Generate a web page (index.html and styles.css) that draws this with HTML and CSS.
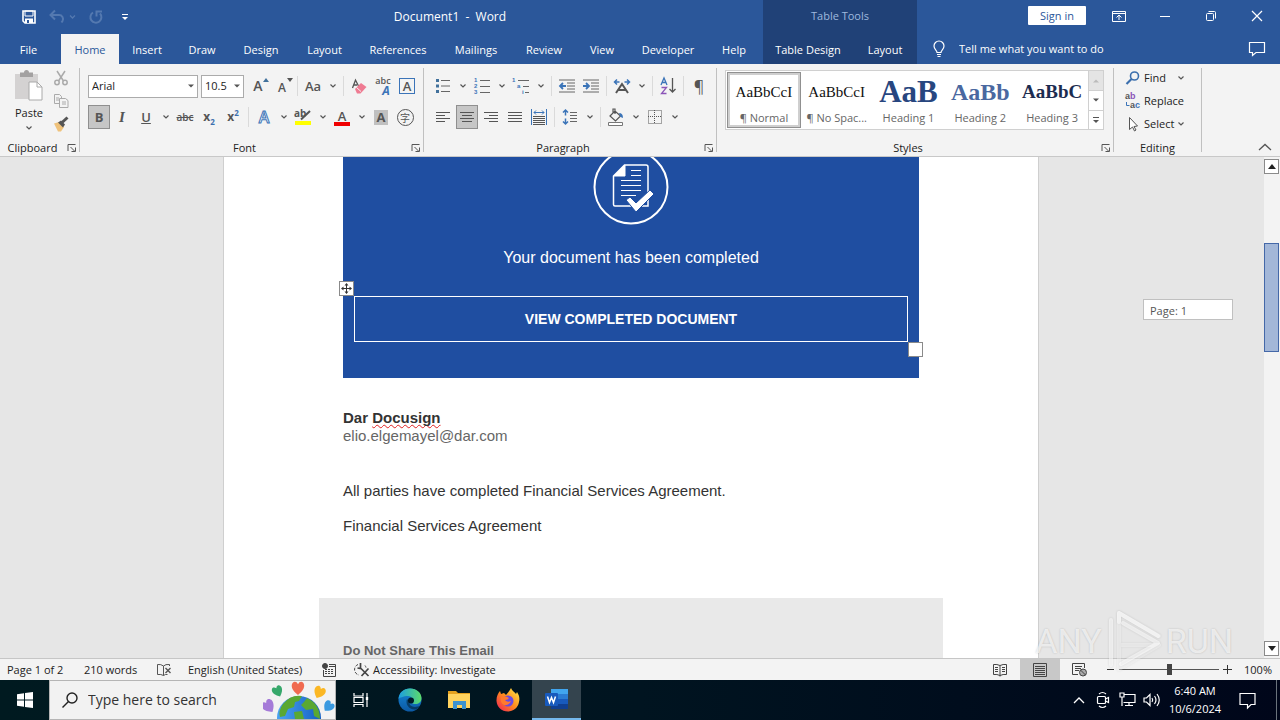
FILE: index.html
```html
<!DOCTYPE html>
<html lang="en">
<head>
<meta charset="utf-8">
<title>Document1 - Word</title>
<link rel="stylesheet" href="styles.css">
</head>
<body>
<svg class="defs" aria-hidden="true">
  <symbol id="chev" viewBox="0 0 8 6"><path d="M1.5 1.5 4 4 6.500 1.500" fill="none" stroke="#555" stroke-width="1.2"/></symbol>
  <symbol id="tri" viewBox="0 0 8 6"><path d="M1 1.500h6L4 4.500z" fill="#555"/></symbol>
  <symbol id="launch" viewBox="0 0 10 10"><path d="M1 8V1.500h7.500M3.500 4l4 4M8.500 4.500v4h-4" fill="none" stroke="#555"/></symbol>
</svg>

<header class="header">
  <div class="head-main">
    <div class="title-row">
      <div class="quick">
        <button class="qbtn" aria-label="Save"><svg width="16" height="16" viewBox="0 0 16 16"><path d="M2 2h12v12H4L2 12z" fill="none" stroke="#fff" stroke-width="1.600"/><path d="M4 2h8v5H4z" fill="none" stroke="#fff" stroke-width="1"/><path d="M4 9.500h8V14H4z" fill="#fff"/><path d="M6 11h2v3H6z" fill="#2b579a"/></svg></button>
        <button class="qbtn wide" aria-label="Undo"><svg width="28" height="16" viewBox="0 0 28 16" fill="none" stroke="#5479b0" stroke-width="2"><path d="M2 6h8a4 4 0 0 1 3.500 6l-1 1.500M6 1.500 1.500 6 6 10.500"/><path d="M21 6.500 23.500 9 26 6.500" stroke-width="1.300"/></svg></button>
        <button class="qbtn" aria-label="Repeat"><svg width="16" height="16" viewBox="0 0 16 16" fill="none" stroke="#5479b0" stroke-width="2"><path d="M5 3.500a5.500 5.500 0 1 0 7 1M8.500 7.500V2.500H14"/></svg></button>
        <button class="qbtn" aria-label="Customize Quick Access Toolbar"><svg width="8" height="8" viewBox="0 0 8 8"><path d="M1 1.500h6" stroke="#fff"/><path d="M1 4h6L4 7z" fill="#fff"/></svg></button>
      </div>
      <div class="doc-title">Document1&nbsp; -&nbsp; Word</div>
    </div>
    <nav class="tabs">
      <button class="tab file">File</button><button class="tab active">Home</button><button class="tab">Insert</button><button class="tab">Draw</button><button class="tab">Design</button><button class="tab">Layout</button><button class="tab">References</button><button class="tab">Mailings</button><button class="tab">Review</button><button class="tab">View</button><button class="tab">Developer</button><button class="tab">Help</button>
    </nav>
  </div>
  <div class="head-tools">
    <div class="tools-title">Table Tools</div>
    <nav class="tool-tabs"><button class="tab">Table Design</button><button class="tab">Layout</button></nav>
  </div>
  <div class="head-right">
    <div class="window-row">
      <button class="signin">Sign in</button>
      <button class="win" aria-label="Ribbon Display Options"><svg width="14" height="12" viewBox="0 0 14 12" fill="none" stroke="#fff"><path d="M.5 1.500h13v10H.5zM.5 3.500h13M7 10V5.500M4.500 7.500 7 5l2.500 2.500"/></svg></button>
      <button class="win" aria-label="Minimize"><svg width="12" height="12" viewBox="0 0 12 12"><path d="M1 6.500h10" stroke="#fff"/></svg></button>
      <button class="win" aria-label="Restore"><svg width="12" height="12" viewBox="0 0 12 12" fill="none" stroke="#fff"><rect x="1.500" y="3.500" width="7" height="7" rx="1"/><path d="M3.500 1.500h6a1 1 0 0 1 1 1v6"/></svg></button>
      <button class="win" aria-label="Close"><svg width="12" height="12" viewBox="0 0 12 12"><path d="m1 1 10 10M11 1 1 11" stroke="#fff" stroke-width="1.200"/></svg></button>
    </div>
    <div class="tell-row">
      <label class="tell"><svg width="14" height="18" viewBox="0 0 14 18" fill="none" stroke="#fff" stroke-width="1.200"><path d="M5 12.500c0-2-3-3-3-6.500a5 5 0 0 1 10 0c0 3.500-3 4.500-3 6.500zM5 14.500h4M5.500 16.500h3"/></svg><input type="text" placeholder="Tell me what you want to do" aria-label="Tell me what you want to do"></label>
      <button class="win" aria-label="Comments"><svg width="18" height="16" viewBox="0 0 18 16"><path d="M1.500 1.500h15v10H8l-3.500 3v-3h-3z" fill="none" stroke="#fff" stroke-width="1.200"/></svg></button>
    </div>
  </div>
</header>

<section class="ribbon">
  <div class="group">
    <div class="clip-body">
      <button class="paste"><svg width="32" height="32" viewBox="0 0 32 32"><path d="M2 4h23v25H2z" fill="#d4d2d2"/><path d="M7 2.500h4a2.500 2.500 0 0 1 5 0h4V7H7z" fill="#a3a1a1"/><path d="M16 12h8l5 5v13H16z" fill="#fff" stroke="#aaa"/><path d="M24 12v5h5" fill="none" stroke="#aaa"/></svg><span>Paste</span><svg width="8" height="6"><use href="#chev"/></svg></button>
      <div class="clip-side">
        <button aria-label="Cut"><svg width="16" height="16" viewBox="0 0 16 16" fill="none" stroke="#aaa" stroke-width="1.500"><path d="m4 1 6.500 10M12 1 5.500 11"/><circle cx="4" cy="12.500" r="2.200"/><circle cx="12" cy="12.500" r="2.200"/></svg></button>
        <button aria-label="Copy"><svg width="16" height="16" viewBox="0 0 16 16" fill="#f3f3f3" stroke="#aaa"><path d="M1.500 1.500h5l2 2v7h-7zM3 5h3M3 7h3"/><path d="M6.500 5.500h6l2.500 2v7H6.500zM9 9h4M9 11h4"/></svg></button>
        <button aria-label="Format Painter"><svg width="16" height="16" viewBox="0 0 16 16"><path d="M1 7.500 6 6l5 5-3 4.500H5z" fill="#efc27b"/><path d="m5 6.500 3-2 4 4-2 3z" fill="#555"/><path d="M9 6.500 14.500 1.500" stroke="#555" stroke-width="3"/></svg></button>
      </div>
    </div>
    <div class="foot"><span>Clipboard</span><button class="launch" aria-label="Clipboard settings"><svg width="10" height="10"><use href="#launch"/></svg></button></div>
  </div>
  <div class="divider"></div>

  <div class="group font-group">
    <div class="rows">
      <div class="row">
        <span class="combo name"><select aria-label="Font"><option>Arial</option></select><svg width="8" height="6"><use href="#tri"/></svg></span>
        <span class="combo size"><select aria-label="Font size"><option>10.5</option></select><svg width="8" height="6"><use href="#tri"/></svg></span>
        <button class="tb" aria-label="Increase font size"><span class="glyph">A</span><svg class="sup" width="6" height="4" viewBox="0 0 6 4"><path d="M3 0 6 4H0z" fill="#41719c"/></svg></button>
        <button class="tb" aria-label="Decrease font size"><span class="glyph small">A</span><svg class="sup" width="6" height="4" viewBox="0 0 6 4"><path d="M0 0h6L3 4z" fill="#555"/></svg></button>
        <i class="sep"></i>
        <button class="tb case">Aa</button><button class="dd" aria-label="Case options"><svg width="8" height="6"><use href="#chev"/></svg></button>
        <i class="sep"></i>
        <button class="tb" aria-label="Clear formatting"><svg width="16" height="16" viewBox="0 0 16 16"><path d="m1.500 10 3-8 3 6M3 7h3" fill="none" stroke="#555" stroke-width="1.300"/><path d="m4 11 6-6 5.500 4-6 6.500H6z" fill="#ef7b92"/><path d="m5.500 9.500 4.500 4" stroke="#f3f3f3"/></svg></button>
        <button class="tb stack" aria-label="Phonetic guide"><span>abc</span><em>A</em></button>
        <button class="tb" aria-label="Character border"><span class="boxed">A</span></button>
      </div>
      <div class="row">
        <button class="tb on bold">B</button><button class="tb italic">I</button><button class="tb under">U</button><button class="dd" aria-label="Underline options"><svg width="8" height="6"><use href="#chev"/></svg></button>
        <button class="tb strike">abc</button><button class="tb script" aria-label="Subscript">x<sub>2</sub></button><button class="tb script" aria-label="Superscript">x<sup>2</sup></button>
        <i class="sep"></i>
        <button class="tb effect">A</button><button class="dd" aria-label="Text effects options"><svg width="8" height="6"><use href="#chev"/></svg></button>
        <button class="tb" aria-label="Text highlight"><svg width="18" height="18" viewBox="0 0 18 18"><text x="0" y="9" class="svg-ab">ab</text><path d="M7 11.500 16 3" stroke="#555" stroke-width="2"/><path d="M1 13h16v4H1z" fill="#ff0"/></svg></button><button class="dd" aria-label="Highlight options"><svg width="8" height="6"><use href="#chev"/></svg></button>
        <button class="tb" aria-label="Font color"><span class="fontcolor">A</span></button><button class="dd" aria-label="Font color options"><svg width="8" height="6"><use href="#chev"/></svg></button>
        <button class="tb" aria-label="Character shading"><span class="shade">A</span></button>
        <button class="tb" aria-label="Enclose characters"><span class="ring">字</span></button>
      </div>
    </div>
    <div class="foot"><span>Font</span><button class="launch" aria-label="Font settings"><svg width="10" height="10"><use href="#launch"/></svg></button></div>
  </div>
  <div class="divider"></div>

  <div class="group para-group">
    <div class="rows">
      <div class="row">
        <button class="tb" aria-label="Bullets"><svg width="16" height="16" viewBox="0 0 16 16"><path d="M1 1h3v3H1zM1 6.500h3v3H1zM1 12h3v3H1z" fill="#41719c"/><path d="M6 2.500h9M6 8h9M6 13.500h9" stroke="#666"/></svg></button><button class="dd" aria-label="Bullet options"><svg width="8" height="6"><use href="#chev"/></svg></button>
        <button class="tb" aria-label="Numbering"><svg width="16" height="18" viewBox="0 0 16 18"><g class="svg-num"><text x="0" y="5">1</text><text x="0" y="11">2</text><text x="0" y="17">3</text></g><path d="M6 3.500h10M6 9.500h10M6 15.500h10" stroke="#666"/></svg></button><button class="dd" aria-label="Numbering options"><svg width="8" height="6"><use href="#chev"/></svg></button>
        <button class="tb" aria-label="Multilevel list"><svg width="18" height="18" viewBox="0 0 18 18"><g class="svg-num"><text x="0" y="5">1</text><text x="5" y="11">a</text><text x="10" y="17">i</text></g><path d="M6 3.500h11M11 9.500h6M13 15.500h4" stroke="#666"/></svg></button><button class="dd" aria-label="Multilevel options"><svg width="8" height="6"><use href="#chev"/></svg></button>
        <i class="sep"></i>
        <button class="tb" aria-label="Decrease indent"><svg width="18" height="16" viewBox="0 0 18 16"><path d="M1 2h16M9 5h8M9 8h8M9 11h8M1 14h16" stroke="#666"/><path d="M8 8H2M5 5 2 8l3 3" fill="none" stroke="#3b74b8" stroke-width="1.800"/></svg></button>
        <button class="tb" aria-label="Increase indent"><svg width="18" height="16" viewBox="0 0 18 16"><path d="M1 2h16M9 5h8M9 8h8M9 11h8M1 14h16" stroke="#666"/><path d="M1 8h6M4 5l3 3-3 3" fill="none" stroke="#3b74b8" stroke-width="1.800"/></svg></button>
        <i class="sep"></i>
        <button class="tb" aria-label="Asian layout"><svg width="18" height="16" viewBox="0 0 18 16" fill="none"><path d="M3 15 9 6l6 9M5 12h8" stroke="#555" stroke-width="2"/><path d="M6.500 4h-5M4 1.500 1.500 4 4 6.500M11.500 4h5M14 1.500 16.500 4 14 6.500" stroke="#3b74b8" stroke-width="1.500"/></svg></button><button class="dd" aria-label="Asian layout options"><svg width="8" height="6"><use href="#chev"/></svg></button>
        <i class="sep"></i>
        <button class="tb" aria-label="Sort"><svg width="16" height="18" viewBox="0 0 16 18" fill="none"><path d="m1 8 3-7 3 7M2 5.500h4" stroke="#3b74b8" stroke-width="1.300"/><path d="M1.500 10.500h5l-5 6h5" stroke="#8b55b8" stroke-width="1.300"/><path d="M12.500 1v14M9.500 12l3 3 3-3" stroke="#555" stroke-width="1.300"/></svg></button>
        <i class="sep"></i>
        <button class="tb pilcrow" aria-label="Show formatting marks">¶</button>
      </div>
      <div class="row">
        <button class="tb" aria-label="Align left"><svg width="16" height="14" viewBox="0 0 16 14"><path d="M1 2.500h14M1 5.500h9M1 8.500h14M1 11.500h9" stroke="#555"/></svg></button>
        <button class="tb on" aria-label="Center"><svg width="16" height="14" viewBox="0 0 16 14"><path d="M1 2.500h14M3 5.500h10M1 8.500h14M3 11.500h10" stroke="#555"/></svg></button>
        <button class="tb" aria-label="Align right"><svg width="16" height="14" viewBox="0 0 16 14"><path d="M1 2.500h14M6 5.500h9M1 8.500h14M6 11.500h9" stroke="#555"/></svg></button>
        <button class="tb" aria-label="Justify"><svg width="16" height="14" viewBox="0 0 16 14"><path d="M1 2.500h14M1 5.500h14M1 8.500h14M1 11.500h14" stroke="#555"/></svg></button>
        <button class="tb" aria-label="Distribute"><svg width="16" height="16" viewBox="0 0 16 16" fill="none"><path d="M.5 0v16M15.500 0v16" stroke="#3b74b8"/><path d="M3 3.500h10M5 1.500l-2 2 2 2M11 1.500l2 2-2 2" stroke="#3b74b8"/><path d="M2 7.500h12M2 9.500h12M2 11.500h12M2 13.500h12M2 15.500h12" stroke="#555"/></svg></button>
        <i class="sep"></i>
        <button class="tb" aria-label="Line spacing"><svg width="16" height="16" viewBox="0 0 16 16" fill="none"><path d="M3.500 1v5.500M1 3.500 3.500 1 6 3.500M3.500 9.500V15M1 12.500 3.500 15 6 12.500" stroke="#3b74b8" stroke-width="1.500"/><path d="M8 3.500h7M8 6.500h7M8 9.500h7M8 12.500h7" stroke="#666"/></svg></button><button class="dd" aria-label="Line spacing options"><svg width="8" height="6"><use href="#chev"/></svg></button>
        <i class="sep"></i>
        <button class="tb" aria-label="Shading"><svg width="18" height="18" viewBox="0 0 18 18" fill="none"><path d="m3 8 5-5 5.500 5-5 5zM6 5V1h2v5" stroke="#555" stroke-width="1.200"/><path d="M12 5q4 0 4 5l-2.500-1z" fill="#3b74b8"/><path d="M1.500 14.500h14v3h-14z" fill="#fff" stroke="#777"/></svg></button><button class="dd" aria-label="Shading options"><svg width="8" height="6"><use href="#chev"/></svg></button>
        <button class="tb" aria-label="Borders"><svg width="14" height="14" viewBox="0 0 14 14"><path d="M.5.500h13v13H.5zM6.500 0v14M0 6.500h14" fill="none" stroke="#555" stroke-dasharray="1 1"/></svg></button><button class="dd" aria-label="Border options"><svg width="8" height="6"><use href="#chev"/></svg></button>
      </div>
    </div>
    <div class="foot"><span>Paragraph</span><button class="launch" aria-label="Paragraph settings"><svg width="10" height="10"><use href="#launch"/></svg></button></div>
  </div>
  <div class="divider"></div>

  <div class="group styles-group">
    <div class="gallery">
      <button class="style picked"><b class="p-normal">AaBbCcI</b><span>¶ Normal</span></button>
      <button class="style"><b class="p-normal">AaBbCcI</b><span>¶ No Spac...</span></button>
      <button class="style"><b class="p-h1">AaB</b><span>Heading 1</span></button>
      <button class="style"><b class="p-h2">AaBb</b><span>Heading 2</span></button>
      <button class="style"><b class="p-h3">AaBbC</b><span>Heading 3</span></button>
      <div class="gscroll">
        <button class="off" aria-label="Previous styles"><svg width="8" height="6" viewBox="0 0 8 6"><path d="M1 4.500h6L4 1.500z" fill="#bbb"/></svg></button>
        <button aria-label="Next styles"><svg width="8" height="6"><use href="#tri"/></svg></button>
        <button aria-label="More styles"><svg width="8" height="8" viewBox="0 0 8 8"><path d="M1 1.500h6" stroke="#555"/><path d="M1 4h6L4 7z" fill="#555"/></svg></button>
      </div>
    </div>
    <div class="foot"><span>Styles</span><button class="launch" aria-label="Styles settings"><svg width="10" height="10"><use href="#launch"/></svg></button></div>
  </div>
  <div class="divider"></div>

  <div class="group edit-group">
    <div class="edit-body">
      <button><svg width="16" height="16" viewBox="0 0 16 16" fill="none" stroke="#3b6fad"><circle cx="9.500" cy="6" r="4" stroke-width="1.600"/><path d="m6.500 9-5 5" stroke-width="2.200"/></svg><span>Find</span><svg class="gap" width="8" height="6"><use href="#chev"/></svg></button>
      <button><svg width="16" height="16" viewBox="0 0 16 16"><g class="svg-rep"><text x="0" y="6">a<tspan fill="#8b55b8">b</tspan></text><text x="5" y="15">a<tspan fill="#3b74b8">c</tspan></text></g><path d="M1.500 9v3.500h3" fill="none" stroke="#3b74b8"/></svg><span>Replace</span></button>
      <button><svg width="16" height="16" viewBox="0 0 16 16"><path d="M4.500 1.500v12l3-2.500 2 4 1.500-1-2-3.500 3.500-.5z" fill="#fff" stroke="#555"/></svg><span>Select</span><svg width="8" height="6"><use href="#chev"/></svg></button>
    </div>
    <div class="foot solo"><span>Editing</span></div>
  </div>
  <div class="divider"></div>
  <button class="collapse" aria-label="Collapse the Ribbon"><svg width="14" height="8" viewBox="0 0 14 8"><path d="m1 7 6-5.500L13 7" fill="none" stroke="#555" stroke-width="1.300"/></svg></button>
</section>

<main class="work">
  <div class="canvas">
    <article class="page">
      <section class="card">
        <svg class="badge" width="76" height="76" viewBox="0 0 76 76" fill="none" stroke="#fff"><circle cx="38" cy="38" r="36.500" stroke-width="2"/><path d="M31.500 16H53a2 2 0 0 1 2 2v39H22a1.500 1.500 0 0 1-1.500-1.500V27z" stroke-width="1.500"/><path d="M32 16v11H21z" fill="#fff"/><path d="M38 21.500h10M38 26.500h10M28 31.500h20M28 36.500h20M28 41.500h20M28 46.500h15" stroke-width="1.200"/><path d="m33 51 4-3 6 6 14-13 4 4-18 18z" fill="#fff" stroke="#1f4ea1" stroke-width="1"/></svg>
        <p class="lead">Your document has been completed</p>
        <div class="cta-wrap">
          <a class="cta" href="#">VIEW COMPLETED DOCUMENT</a>
          <span class="handle move"><svg width="11" height="11" viewBox="0 0 11 11"><path d="M5.500 1v9M1 5.500h9" stroke="#333"/><path d="M5.500 0 7.500 2.500h-4zM5.500 11l-2-2.500h4zM0 5.500l2.500-2v4zM11 5.500l-2.500 2v-4z" fill="#333"/></svg></span>
          <span class="handle resize"></span>
        </div>
      </section>
      <p class="sender">Dar <span class="typo">Docusign</span></p>
      <p class="mail">elio.elgemayel@dar.com</p>
      <p class="para">All parties have completed Financial Services Agreement.</p>
      <p class="para last">Financial Services Agreement</p>
      <section class="notice"><h2>Do Not Share This Email</h2></section>
    </article>
    <div class="tip">Page: 1</div>
  </div>
  <div class="vscroll">
    <button aria-label="Scroll up"><svg width="8" height="5" viewBox="0 0 8 5"><path d="M4 0 8 5H0z" fill="#222"/></svg></button>
    <div class="track"><div class="thumb"></div></div>
    <button aria-label="Scroll down"><svg width="8" height="5" viewBox="0 0 8 5"><path d="M0 0h8L4 5z" fill="#222"/></svg></button>
  </div>
  <div class="mark"><span>ANY</span><svg width="58" height="62" viewBox="0 0 58 62" fill="none" stroke="#fff" stroke-width="4" stroke-linejoin="round" stroke-linecap="round"><path d="M14 12V3l40 23M14 3v56l40-24-40 0" stroke-opacity=".35"/><path d="M6 10v45M14 12V3l39 23M16 54l37-21-35-20" stroke-opacity=".6"/></svg><span>RUN</span></div>
</main>

<footer class="status">
  <span class="st-page">Page 1 of 2</span>
  <span class="st-words">210 words</span>
  <svg class="st-book" width="16" height="14" viewBox="0 0 16 14" fill="none" stroke="#555"><path d="M7.500 12.500Q5 11 1.500 11.500v-10Q5 1 7.500 3zM7.500 3q2-2 6-1.500V3M7.500 12.500q2-1.500 4-1"/><path d="m9.500 5 5 5M14.500 5l-5 5" stroke-width="1.400"/></svg>
  <span class="st-lang">English (United States)</span>
  <svg class="st-macro" width="14" height="14" viewBox="0 0 14 14" fill="none" stroke="#444"><circle cx="3" cy="3" r="2.500" fill="#444"/><path d="M7 1.500h6.500v12h-12V7M7 3.500h6" /><path d="M3 6.500h9M3 8.500h9M3 10.500h9" stroke-dasharray="2 1"/></svg>
  <span class="st-acc"><svg width="18" height="16" viewBox="0 0 18 16" fill="none" stroke="#444"><path d="M5 2.500A5.500 5.500 0 0 0 6 13M12 3.500a5 5 0 0 1 1 2" stroke-dasharray="3 1.500"/><path d="M7.500 1v5.500L4.500 6M8 6.500 15.500 14M15.500 6.500 8.500 14" stroke-width="1.700"/></svg>Accessibility: Investigate</span>
  <span class="grow"></span>
  <button class="view" aria-label="Read Mode"><svg width="14" height="14" viewBox="0 0 14 14" fill="none" stroke="#444"><path d="M7 12.500Q4 11 .500 11.500v-10Q4 1 7 2.500 10 1 13.500 1.500v10Q10 11 7 12.500zM7 2.500v11M2 4.500h3M2 6.500h3M2 8.500h3M9 4.500h3M9 6.500h3M9 8.500h3"/></svg></button>
  <button class="view current" aria-label="Print Layout"><svg width="14" height="14" viewBox="0 0 14 14" fill="none" stroke="#444"><path d="M.5.500h13v13H.5zM2 3.500h10M2 5.500h10M2 7.500h10M2 9.500h10M2 11.500h10"/></svg></button>
  <button class="view" aria-label="Web Layout"><svg width="16" height="14" viewBox="0 0 16 14" fill="none" stroke="#444"><path d="M12.500 5V.500H.500v11H6M3 3.500h7M3 5.500h6M3 7.500h4"/><circle cx="11" cy="9.500" r="3.500" fill="#aaa"/><path d="m8.500 7 5 5"/></svg></button>
  <span class="zoom"><button aria-label="Zoom out"><svg width="9" height="9" viewBox="0 0 9 9"><path d="M1 4.500h7" stroke="#333"/></svg></button><input type="range" min="0" max="100" value="50" aria-label="Zoom"><button aria-label="Zoom in"><svg width="9" height="9" viewBox="0 0 9 9"><path d="M0 4.500h9M4.500 0v9" stroke="#333"/></svg></button></span>
  <span class="st-zoom">100%</span>
</footer>

<div class="taskbar">
  <button class="start" aria-label="Start"><svg width="16" height="16" viewBox="0 0 16 16" fill="#fff"><path d="m0 2.200 7-1v6.300H0zM8 1l8-1v7.500H8zM0 8.500h7v6.300l-7-1zM8 8.500h8V16l-8-1z"/></svg></button>
  <label class="search"><svg width="18" height="18" viewBox="0 0 18 18" fill="none" stroke="#222" stroke-width="1.400"><circle cx="11" cy="7" r="5"/><path d="m7.500 10.500-6 6"/></svg><input type="text" placeholder="Type here to search" aria-label="Type here to search">
    <svg class="globe" width="72" height="38" viewBox="0 0 72 38"><defs><path id="heart" d="M0 5C-8-1-5-6-2.500-6Q-1-6 0-4 1-6 2.500-6C5-6 8-1 0 5z"/><linearGradient id="sea" x2="1"><stop stop-color="#4ba3f2"/><stop offset="1" stop-color="#1560c4"/></linearGradient></defs><circle cx="36" cy="37" r="22" fill="url(#sea)"/><path d="M20 23q8-10 19-8l-3 5-4 1-1 5-6 2-3 7-5 1q-2-6 3-13zM44 17q13 6 13 21l-6-3-1-7-7 1-5-5 3-3zM31 31l8-1 2 8h-9z" fill="#5aa832"/><use href="#heart" transform="translate(35 8) scale(1.200)" fill="#f06a50"/><use href="#heart" transform="translate(15 11) rotate(-25)" fill="#37a86b"/><use href="#heart" transform="translate(56 12) rotate(25) scale(1.100)" fill="#fbb724"/><use href="#heart" transform="translate(6 26) rotate(-35) scale(1.200)" fill="#a57bd8"/><use href="#heart" transform="translate(65 26) rotate(40)" fill="#3b9ae0"/></svg>
  </label>
  <button class="task" aria-label="Task View"><svg width="16" height="16" viewBox="0 0 16 16" fill="none" stroke="#fff" stroke-width="1.200"><path d="M1 1v3h9V1M1 15v-2.500h9V15M1 5.500h9v5H1zM14 1v4M14 8v7"/><path d="M14 5v3" stroke-width="2.400"/></svg></button>
  <button class="task" aria-label="Microsoft Edge"><svg width="24" height="24" viewBox="0 0 24 24"><defs><linearGradient id="eg" x2="1" y2="0"><stop stop-color="#1b9de2"/><stop offset="1" stop-color="#5ddc6a"/></linearGradient><linearGradient id="eb" y2="1" x2="0"><stop stop-color="#1688d8"/><stop offset="1" stop-color="#0c59a4"/></linearGradient></defs><circle cx="12" cy="12" r="11.500" fill="url(#eb)"/><path d="M.5 11C1 4 6 .5 12 .5c7 0 11.500 4.500 11.500 9.500 0 4-3 6-6 6-4 0-4.500-2-3.500-3 1-2-.5-5-4-5C5.500 8 1 10 .5 11z" fill="url(#eg)"/><path d="M9 11c-2 5 2 11 8.500 10.500 2-.5 4-2 5-4-6 3-12 1-11-4z" fill="#001622" opacity=".5"/><circle cx="13" cy="12.500" r="3" fill="#001a28"/></svg></button>
  <button class="task" aria-label="File Explorer"><svg width="22" height="20" viewBox="0 0 22 20"><path d="M0 1h8l2 2h12v4H0z" fill="#e5a21f"/><path d="M0 4h22v14H0z" fill="#ffd35e"/><path d="M5 11h13v8h-4v-4H9v4H5z" fill="#3c92cf"/></svg></button>
  <button class="task" aria-label="Firefox"><svg width="24" height="24" viewBox="0 0 24 24"><defs><linearGradient id="ff" x1="1" x2="0" y2="1"><stop stop-color="#fff04a"/><stop offset=".5" stop-color="#ff8a1d"/><stop offset="1" stop-color="#ee1a5b"/></linearGradient></defs><path d="M15 0c1 3 4 4 5 6l1-2c2 3 3 6 2 10-1 6-6 9.500-11 9.500C5.500 23.500 1 19 .5 13 .3 9 2 5 4 3l1 3 3-1 2 2q3-3 5-7z" fill="url(#ff)"/><circle cx="12" cy="13" r="5.500" fill="#6a4be0"/><path d="M5 9q4-2 8 1-1 2-4 2 2 3 6 1-2 5-7 4-4-2-3-8z" fill="#ff7a2d"/></svg></button>
  <button class="task open" aria-label="Word"><svg width="24" height="22" viewBox="0 0 24 22"><path d="M6 1h17v5H6z" fill="#41a5ee"/><path d="M6 6h17v5H6z" fill="#2b7cd3"/><path d="M6 11h17v5H6z" fill="#185abd"/><path d="M6 16h17v5H6z" fill="#103f91"/><rect y="5" width="13" height="13" rx="1" fill="#185abd"/><path d="m2.500 8.500 2 6 2-5 2 5 2-6" fill="none" stroke="#fff" stroke-width="1.500"/></svg></button>
  <span class="grow"></span>
  <button class="tray" aria-label="Show hidden icons"><svg width="12" height="8" viewBox="0 0 12 8"><path d="m1 7 5-5 5 5" fill="none" stroke="#fff" stroke-width="1.300"/></svg></button>
  <button class="tray" aria-label="Meet Now"><svg width="14" height="18" viewBox="0 0 14 18" fill="none" stroke="#fff" stroke-width="1.200"><rect x="1.500" y="5.500" width="8" height="7" rx="1"/><path d="m9.500 8 3-1.500v5L9.500 10M3 3q3.500-3 7 0M3 15q3.500 3 7 0"/></svg></button>
  <button class="tray" aria-label="Network"><svg width="17" height="16" viewBox="0 0 17 16" fill="none" stroke="#fff" stroke-width="1.200"><path d="M5 2.500h11v8H4.500M10 10.500v3M6 13.500h8M1 1h4v4H1zM3 5v9"/></svg></button>
  <button class="tray" aria-label="Volume"><svg width="17" height="16" viewBox="0 0 17 16" fill="none" stroke="#fff" stroke-width="1.200"><path d="M1 6h2.500L7 2.500v11L3.500 10H1zM9 6q1.500 2 0 4M11.500 4q3 4 0 8M14 2q4.500 6 0 12"/></svg></button>
  <div class="clock"><span>6:40 AM</span><span>10/6/2024</span></div>
  <button class="action" aria-label="Notifications"><svg width="17" height="17" viewBox="0 0 17 17"><path d="M1 1.500h15v11h-4l-3.500 3.500v-3.500H1z" fill="none" stroke="#fff" stroke-width="1.200"/></svg></button>
  <i class="peek"></i>
</div>
</body>
</html>
```
FILE: styles.css
```css
* { box-sizing: border-box; }
html, body { height: 100%; }
body {
  margin: 0;
  display: flex;
  flex-direction: column;
  overflow: hidden;
  font-family: "Open Sans", "Noto Sans", sans-serif;
  font-size: 11px;
  line-height: 16px;
  color: #333;
  background: #e6e6e6;
}
button, input, select { font: inherit; color: inherit; }
button { border: 0; padding: 0; margin: 0; background: none; display: flex; align-items: center; justify-content: center; }
svg { display: block; flex: none; overflow: visible; }
p, h2 { margin: 0; }
.defs { position: absolute; width: 0; height: 0; }
.grow { flex: 1; }

/* Header */
.header { display: flex; flex: none; height: 64px; background: #2b579a; color: #fff; }
.head-main { flex: 0 0 763px; display: flex; flex-direction: column; }
.title-row { display: flex; height: 34px; align-items: center; }
.quick { display: flex; align-items: center; padding-left: 17px; width: 137px; }
.qbtn { width: 24px; height: 24px; }
.qbtn + .qbtn { margin-left: 5px; }
.qbtn.wide { width: 34px; }
.doc-title { flex: 1; text-align: center; font-size: 12px; }
.tabs { display: grid; grid-template-columns: 61px 58px 56px 54px 64px 63px 84px 72px 64px 52px 80px 52px; height: 30px; }
.tab { height: 30px; padding-top: 2px; white-space: nowrap; }
.tab.file { padding-right: 4px; }
.tab.active { background: #f3f3f3; color: #2b579a; }
.head-tools { flex: 0 0 154px; display: flex; flex-direction: column; background: #204177; }
.tools-title { height: 34px; line-height: 32px; text-align: center; color: #9fb9de; }
.tool-tabs { display: grid; grid-template-columns: 90px 64px; }
.head-right { flex: 1; display: flex; flex-direction: column; }
.window-row { display: flex; height: 34px; align-items: center; justify-content: flex-end; padding-bottom: 3px; }
.signin { background: #fff; color: #2b579a; width: 58px; height: 19px; border-radius: 1px; margin-right: 10px; }
.win { width: 46px; height: 30px; }
.tell-row { display: flex; height: 30px; align-items: center; justify-content: space-between; padding-left: 15px; }
.tell { display: flex; align-items: center; gap: 13px; flex: 1; }
.tell input { flex: 1; min-width: 0; border: 0; background: none; padding: 0; outline: 0; }
.tell input::placeholder { color: #fff; opacity: 1; }

/* Ribbon */
.ribbon { display: flex; flex: none; height: 93px; background: #f3f3f3; border-bottom: 1px solid #c8c8c8; }
.divider { width: 1px; margin: 4px 0; background: #c0c0c0; }
.group { display: flex; flex-direction: column; }
.foot { display: grid; grid-template-columns: 1fr 14px; height: 16px; align-items: center; text-align: center; color: #222; }
.foot.solo { grid-template-columns: 1fr; }
.launch { height: 16px; }
.launch svg { width: 10px; }
.clip-body { display: flex; height: 76px; padding: 6px 8px 0 10px; }
.clip-body + .foot { width: 79px; }
.paste { flex-direction: column; justify-content: flex-start; width: 38px; height: 64px; }
.paste span { margin-bottom: 4px; color: #222; }
.paste svg:first-child { margin-bottom: 3px; }
.clip-side { display: flex; flex-direction: column; gap: 7px; margin-left: 5px; }
.rows { height: 76px; padding: 10px 0 0 8px; display: flex; flex-direction: column; gap: 7px; }
.row { display: flex; height: 24px; align-items: center; }
.font-group { width: 343px; }
.para-group { width: 292px; }
.styles-group { width: 396px; }
.edit-group { width: 87px; }
.tb { width: 24px; height: 24px; position: relative; color: #555; flex: none; }
.dd { width: 15px; height: 24px; flex: none; }
.tb.on { width: 22px; margin: 0 1px; background: #c6c6c6; border: 1px solid #8f8f8f; }
.tb.on.bold { margin: 0; }
.sep { width: 1px; height: 20px; margin: 0 3px; background: #dadada; }
.combo { position: relative; height: 23px; }
.combo select { appearance: none; width: 100%; height: 23px; border: 1px solid #ababab; border-radius: 0; background: #fff; color: #222; padding: 0 3px; }
.combo svg { position: absolute; right: 3px; top: 8px; pointer-events: none; }
.combo.name { width: 110px; margin-right: 3px; }
.combo.size { width: 43px; margin-right: 2px; }
.glyph { font-size: 14px; font-weight: 600; }
.glyph.small { font-size: 12px; padding-top: 3px; }
.sup { position: absolute; right: 1px; top: 4px; }
.tb.case { font-size: 13px; font-weight: 600; }
.stack { flex-direction: column; line-height: 10px; }
.stack span { font-size: 9px; font-weight: 600; }
.stack em { font-size: 12px; font-weight: 700; color: #3b74b8; padding-left: 6px; }
.boxed { width: 16px; height: 16px; border: 1px solid #3b74b8; font-size: 13px; font-weight: 600; line-height: 14px; }
.bold { font-size: 13px; font-weight: 700; }
.italic { font: italic bold 15px "Liberation Serif", serif; }
.under { font-size: 13px; font-weight: 600; text-decoration: underline; }
.strike { font-size: 10px; font-weight: 600; text-decoration: line-through; }
.script { font-size: 12px; font-weight: 700; }
.script sub, .script sup { font-size: 8px; line-height: 8px; color: #3b6fad; }
.script sub { align-self: flex-end; padding-bottom: 3px; }
.script sup { align-self: flex-start; padding-top: 4px; }
.effect { font-size: 16px; font-weight: 600; color: #fff; -webkit-text-stroke: 1px #3b74b8; }
.fontcolor { width: 16px; height: 17px; font-size: 13px; font-weight: 600; line-height: 14px; border-bottom: 4px solid #f00000; }
.shade { width: 14px; height: 15px; background: #c0c0c0; font-size: 13px; font-weight: 700; line-height: 15px; }
.ring { width: 17px; height: 17px; border: 1px solid #555; border-radius: 50%; font: 10px/15px "Noto Sans CJK SC", sans-serif; }
.svg-ab { font: bold 10px "Open Sans", sans-serif; fill: #555; }
.svg-num { font: bold 6px "Liberation Sans", sans-serif; fill: #3b74b8; }
.svg-rep { font: bold 9px "Liberation Sans", sans-serif; fill: #555; }
.pilcrow { font-size: 16px; }
.para-group .rows { padding-left: 7px; }
.gallery { display: flex; height: 60px; margin: 6px 9px 10px 8px; padding: 1px 0 1px 1px; border: 1px solid #d0d0d0; background: #fff; }
.style { flex: 1; flex-direction: column; height: 56px; min-width: 0; white-space: nowrap; color: #666; }
.style.picked { border: 1px solid #909090; box-shadow: inset 0 0 0 2px #cfcfcf; }
.style b { height: 36px; line-height: 38px; font-family: "Liberation Serif", serif; }
.style span { line-height: 18px; }
.p-normal { font-size: 15px; font-weight: 400; color: #111; }
.p-h1 { font-size: 31px; color: #28467f; }
.p-h2 { font-size: 24px; color: #4a68a0; }
.p-h3 { font-size: 19px; color: #1c2c50; }
.gscroll { width: 15px; margin: -1px 0; border-left: 1px solid #d0d0d0; display: grid; grid-template-rows: 1fr 1fr 1fr; }
.gscroll button + button { border-top: 1px solid #d0d0d0; }
.gscroll .off { background: #e4e4e4; }
.edit-body { display: flex; flex-direction: column; gap: 7px; height: 76px; padding: 6px 0 0 11px; }
.edit-body button { justify-content: flex-start; gap: 3px; height: 16px; color: #222; }
.edit-body .gap { margin-left: 8px; }
.collapse { margin: auto 8px 4px auto; height: 10px; }

/* Document area */
.work { flex: 1; min-height: 0; display: flex; position: relative; }
.canvas { flex: 1; min-width: 0; position: relative; overflow: hidden; display: flex; justify-content: center; align-items: flex-start; padding-right: 2px; background: #e6e6e6; }
.page { width: 816px; margin-top: -20px; padding: 0 119px 80px; background: #fff; border: 1px solid #cfcfcf; font-family: "Liberation Sans", Arial, sans-serif; font-size: 15px; line-height: 18px; }
.card { background: #1f4ea1; color: #fff; padding: 11px 11px 36px; }
.badge { margin: 0 auto 24px; }
.lead { text-align: center; font-size: 16px; margin-bottom: 29px; }
.cta-wrap { position: relative; }
.cta { display: block; border: 1px solid #fff; color: #fff; text-decoration: none; text-align: center; font-size: 14px; font-weight: 700; line-height: 44px; }
.handle { position: absolute; width: 15px; height: 15px; background: #fff; border: 1px solid #8a8a8a; display: flex; align-items: center; justify-content: center; }
.handle.move { left: -15px; top: -15px; }
.handle.resize { right: -15px; bottom: -15px; }
.sender { margin-top: 31px; font-weight: 700; }
.typo { text-decoration: underline wavy #e02020 1px; text-underline-offset: 1px; text-decoration-skip-ink: none; }
.mail { color: #666; margin-bottom: 37px; }
.para { margin-bottom: 17px; }
.para.last { margin-bottom: 63px; }
.notice { margin: 0 -24px; padding: 44px 24px; background: #e9e9e9; color: #666; }
.notice h2 { font-size: 13px; line-height: 18px; }
.tip { position: absolute; right: 31px; top: 142px; width: 90px; height: 21px; line-height: 21px; padding-left: 6px; background: #fff; border: 1px solid #c0c0c0; color: #555; }
.vscroll { width: 16px; padding: 2px 1px 2px 0; display: flex; flex-direction: column; background: #f3f3f3; }
.vscroll button { height: 15px; background: #fff; border: 1px solid #8a8a8a; }
.track { flex: 1; padding-top: 69px; }
.thumb { height: 109px; background: #a3b7d8; border: 1px solid #4468a8; }
.mark { position: absolute; right: 47px; bottom: -14px; display: flex; align-items: center; gap: 3px; color: rgba(255, 255, 255, .7); font: 400 34px/44px "Roboto", sans-serif; text-shadow: 0 0 2px rgba(0, 0, 0, .2); pointer-events: none; z-index: 2; }
.mark svg { filter: drop-shadow(0 0 1px rgba(0, 0, 0, .2)); }

/* Status bar */
.status { flex: none; display: flex; align-items: center; height: 22px; padding: 0 8px 0 7px; background: #f3f3f3; border-top: 1px solid #c6c6c6; color: #222; white-space: nowrap; }
.st-page { width: 77px; }
.st-words { width: 72px; }
.st-book { margin-right: 16px; }
.st-lang { width: 134px; }
.st-macro { margin-right: 17px; }
.st-acc { display: flex; align-items: center; gap: 2px; }
.view { width: 40px; height: 21px; }
.view.current { background: #c8c8c8; }
.zoom { display: flex; align-items: center; margin: 0 12px 0 6px; }
.zoom button { width: 9px; height: 16px; }
.zoom input { appearance: none; width: 100px; height: 16px; margin: 0 4px; background: linear-gradient(#555, #555) center / 100% 1px no-repeat; }
.zoom input::-webkit-slider-thumb { appearance: none; width: 5px; height: 11px; background: #444; }
.st-zoom { width: 28px; text-align: right; }

/* Taskbar */
.taskbar { flex: none; display: flex; height: 40px; color: #fff; background: linear-gradient(90deg, #001a20, #001420 50%, #00061a); }
.start { width: 49px; }
.search { display: flex; align-items: center; gap: 9px; width: 287px; padding-left: 11px; background: #f2f2f2; border: 1px solid #b5b5b5; }
.search input { width: 162px; border: 0; padding: 0; background: none; outline: 0; font-size: 14px; line-height: 20px; }
.search input::placeholder { color: #333; opacity: 1; }
.globe { margin: 0 0 0 auto; overflow: hidden; }
.task { width: 49px; height: 40px; }
.task.open { background: #34444e; border-bottom: 2px solid #76b9ed; }
.tray { width: 24px; height: 40px; }
.clock { width: 64px; display: flex; flex-direction: column; justify-content: center; align-items: center; line-height: 18px; }
.action { width: 40px; height: 40px; }
.peek { width: 1px; margin: 0 3px 0 9px; background: #6a737c; }
```
